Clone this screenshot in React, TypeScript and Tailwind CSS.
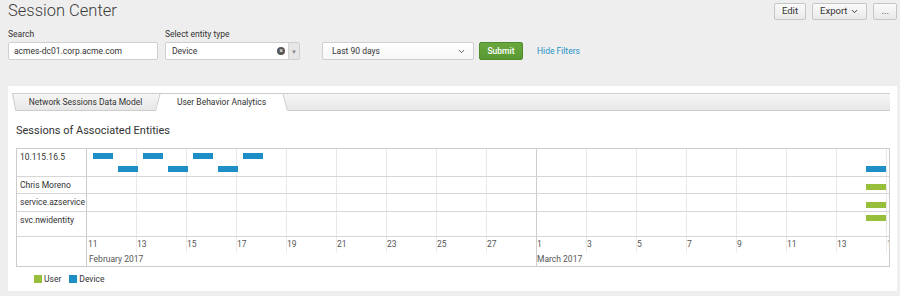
import { ChevronDown } from 'lucide-react';

type Bar = { x: number; y: number; w: number; c: string };

const BLUE = '#1e8ec6';
const GREEN = '#97bf3c';

const rows: { label: string; h: string; bars: Bar[] }[] = [
    {
        label: '10.115.16.5',
        h: 'h-[28px]',
        bars: [
            { x: 6, y: 4, w: 20, c: BLUE },
            { x: 56, y: 4, w: 20, c: BLUE },
            { x: 106, y: 4, w: 20, c: BLUE },
            { x: 156, y: 4, w: 20, c: BLUE },
            { x: 31, y: 17, w: 20, c: BLUE },
            { x: 81, y: 17, w: 20, c: BLUE },
            { x: 131, y: 17, w: 20, c: BLUE },
            { x: 779, y: 17, w: 20, c: BLUE },
        ],
    },
    { label: 'Chris Moreno', h: 'h-[17px]', bars: [{ x: 779, y: 7, w: 20, c: GREEN }] },
    { label: 'service.azservice', h: 'h-[18px]', bars: [{ x: 779, y: 8, w: 20, c: GREEN }] },
    { label: 'svc.nwidentity', h: 'h-[25px]', bars: [{ x: 779, y: 3, w: 20, c: GREEN }] },
];

const ticks = ['11', '13', '15', '17', '19', '21', '23', '25', '27', '1', '3', '5', '7', '9', '11', '13', '15'];

function Grid({ bars }: { bars: Bar[] }) {
    return (
        <svg className="absolute inset-0 w-full h-full">
            {Array.from({ length: 16 }, (_, i) => (
                <line
                    key={i}
                    x1={50 * (i + 1) - 0.5}
                    x2={50 * (i + 1) - 0.5}
                    y1={0}
                    y2={40}
                    stroke={i === 8 ? '#cdcdcd' : '#e8e8e8'}
                    strokeWidth={1}
                />
            ))}
            {bars.map((b, i) => (
                <rect key={i} x={b.x} y={b.y} width={b.w} height={6} fill={b.c} />
            ))}
        </svg>
    );
}

function Btn({ children }: { children: React.ReactNode }) {
    return (
        <button className="h-[17px] px-[7px] flex items-center gap-[3px] rounded-[2px] border border-[#c6c6c6] bg-gradient-to-b from-[#fafafa] to-[#e9e9e9] text-[9.5px] text-[#333]">
            {children}
        </button>
    );
}

export default function App() {
    return (
        <div className="w-[900px] h-[296px] overflow-hidden bg-[#eeeeee] font-[Roboto,sans-serif] text-[#333]">
            {/* header */}
            <div className="flex items-start justify-between pl-[8px] pr-[3px] pt-[1px]">
                <h1 className="text-[16.5px] leading-[20px] font-light text-[#3c3c3c]">Session Center</h1>
                <div className="flex gap-[6px] pt-[2px]">
                    <Btn>Edit</Btn>
                    <Btn>
                        Export <ChevronDown className="w-[9px] h-[9px]" strokeWidth={2.5} />
                    </Btn>
                    <Btn>...</Btn>
                </div>
            </div>

            {/* filters */}
            <div className="flex items-end pl-[8px] mt-[8px]">
                <div className="flex flex-col">
                    <label className="text-[8.5px] leading-[10px] mb-[3px]">Search</label>
                    <div className="w-[150px] h-[18px] bg-white border border-[#cfcfcf] rounded-[2px] pl-[5px] text-[8.5px] leading-[16px]">
                        acmes-dc01.corp.acme.com
                    </div>
                </div>
                <div className="flex flex-col ml-[7px]">
                    <label className="text-[8.5px] leading-[10px] mb-[3px]">Select entity type</label>
                    <div className="flex w-[135px] h-[18px] border border-[#cfcfcf] rounded-[2px] overflow-hidden">
                        <div className="flex-1 bg-white flex items-center justify-between pl-[6px] pr-[3px] text-[8.5px]">
                            <span>Device</span>
                            <span className="w-[8px] h-[8px] rounded-full bg-[#555] text-white flex items-center justify-center text-[7px] leading-none">
                                ×
                            </span>
                        </div>
                        <div className="w-[11px] bg-[#e6e6e6] border-l border-[#d4d4d4] flex items-center justify-center text-[6px] text-[#888]">
                            ▼
                        </div>
                    </div>
                </div>
                <div className="ml-[22px] w-[152px] h-[18px] border border-[#cfcfcf] rounded-[2px] bg-gradient-to-b from-white to-[#f6f6f6] flex items-center justify-between pl-[9px] pr-[7px] text-[8.5px]">
                    <span>Last 90 days</span>
                    <ChevronDown className="w-[9px] h-[9px] text-[#555]" strokeWidth={2.5} />
                </div>
                <button className="ml-[5px] w-[44px] h-[18px] rounded-[2px] border border-[#4f8a2c] bg-gradient-to-b from-[#68a83d] to-[#5a9933] text-white text-[8.5px] font-medium">
                    Submit
                </button>
                <a className="ml-[14px] h-[18px] leading-[18px] text-[8.5px] text-[#1e93c6]">Hide Filters</a>
            </div>

            {/* panel */}
            <div className="mt-[26px] ml-[8px] mr-[3px] h-[205px] bg-white pt-[7px] pl-[4px] pr-[7px]">
                {/* tabs */}
                <div className="relative flex h-[18px] border-t border-b border-[#cdcdcd] bg-gradient-to-b from-[#f6f6f6] to-[#e7e7e7] text-[8.5px]">
                    <svg className="absolute left-0 -top-px w-[4px] h-[18px]">
                        <polygon points="0,0 3.5,18 0,18" fill="white" />
                        <line x1={0.5} y1={0} x2={3.5} y2={17} stroke="#cdcdcd" />
                    </svg>
                    <div className="w-[143px] flex items-center justify-center pl-[4px]">Network Sessions Data Model</div>
                    <div className="relative w-[133px] h-[17px] -mb-px flex items-center justify-center">
                        <svg className="absolute inset-0 w-[133px] h-[17px]">
                            <polygon points="4.5,0 128,0 133,17 0,17" fill="white" />
                            <line x1={5} y1={0} x2={0.5} y2={17} stroke="#cdcdcd" />
                            <line x1={128} y1={0} x2={132.5} y2={17} stroke="#cdcdcd" />
                        </svg>
                        <span className="relative">User Behavior Analytics</span>
                    </div>
                </div>

                <h2 className="ml-[4px] mt-[13px] text-[11px] leading-[14px] text-[#333]">Sessions of Associated Entities</h2>

                {/* chart */}
                <div className="ml-[4px] mt-[10px] border border-[#cccccc] text-[8.5px]">
                    {rows.map((r) => (
                        <div key={r.label} className={`flex ${r.h} border-b border-[#d6d6d6]`}>
                            <div className="w-[70px] shrink-0 border-r border-[#cccccc] pl-[3px] pt-[3px] leading-[10px] whitespace-nowrap">
                                {r.label}
                            </div>
                            <div className="relative flex-1 overflow-hidden">
                                <Grid bars={r.bars} />
                            </div>
                        </div>
                    ))}
                    <div className="flex h-[29px]">
                        <div className="w-[70px] shrink-0 border-r border-[#cccccc]" />
                        <div className="flex-1 overflow-hidden flex flex-col text-[#555]">
                            <div className="flex h-[16px]">
                                {ticks.map((t, i) => (
                                    <div
                                        key={i}
                                        className={
                                            i === 0
                                                ? 'w-[49px] shrink-0 pl-[1px] pt-[2px] leading-[10px]'
                                                : i === 9
                                                  ? 'w-[50px] shrink-0 border-l border-[#cdcdcd] pt-[2px] leading-[10px]'
                                                  : 'w-[50px] shrink-0 border-l border-[#ececec] pt-[2px] leading-[10px]'
                                        }
                                    >
                                        {t}
                                    </div>
                                ))}
                            </div>
                            <div className="flex flex-1">
                                <div className="w-[449px] shrink-0 pl-[2px] pt-[1px] leading-[10px]">February 2017</div>
                                <div className="flex-1 border-l border-[#cdcdcd] pt-[1px] leading-[10px]">March 2017</div>
                            </div>
                        </div>
                    </div>
                </div>

                {/* legend */}
                <div className="flex items-center ml-[22px] mt-[6px] text-[8.5px]">
                    <span className="w-[8px] h-[8px] bg-[#97bf3c] mr-[2px]" />
                    <span>User</span>
                    <span className="w-[8px] h-[8px] bg-[#1e8ec6] ml-[8px] mr-[2px]" />
                    <span>Device</span>
                </div>
            </div>
        </div>
    );
}
